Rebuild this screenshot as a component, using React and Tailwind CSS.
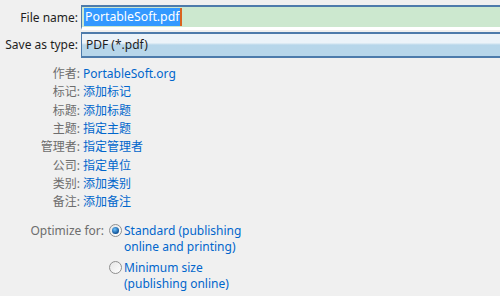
import React from 'react'

const meta = [
  ['作者:', 'PortableSoft.org'],
  ['标记:', '添加标记'],
  ['标题:', '添加标题'],
  ['主题:', '指定主题'],
  ['管理者:', '指定管理者'],
  ['公司:', '指定单位'],
  ['类别:', '添加类别'],
  ['备注:', '添加备注'],
]

function Radio({ checked }) {
  return (
    <span className="mt-[1px] flex h-[13px] w-[13px] shrink-0 items-center justify-center rounded-full border border-[#8f8f8f] bg-gradient-to-br from-[#e6e6e6] to-[#ffffff]">
      {checked && (
        <span className="h-[7px] w-[7px] rounded-full bg-[radial-gradient(circle_at_40%_35%,#6ec3ff,#0d4f94_70%)]" />
      )}
    </span>
  )
}

export default function App() {
  return (
    <div
      className="h-[296px] w-[500px] overflow-hidden bg-[#f0f0f0] text-[12px] text-[#1e1e1e]"
      style={{ fontFamily: '"Noto Sans", "Noto Sans CJK SC", sans-serif' }}
    >
      {/* File name */}
      <div className="flex items-center pt-[5px]">
        <span className="w-[81px] pr-[3px] text-right">File name:</span>
        <div className="flex h-[25px] flex-1 items-center border-t-2 border-l border-[#4d7bab] border-b-[3px] border-b-white bg-[#cce8cf] pl-[2px]">
          <span className="bg-[#3399ff] px-[1px] text-[12.3px] leading-[18px] text-white">PortableSoft.pdf</span>
          <span className="h-[18px] w-[2px] bg-[#d9631f]" />
        </div>
      </div>

      {/* Save as type */}
      <div className="mt-[2px] flex items-center">
        <span className="w-[81px] pr-[3px] text-right">Save as type:</span>
        <div className="flex h-[26px] flex-1 items-center border-y-2 border-l border-[#4d7bab] bg-gradient-to-b from-[#ecf3f9] from-40% to-[#b7d6ea] to-50% pl-[4px]">
          PDF (*.pdf)
        </div>
      </div>

      {/* metadata */}
      <div className="mt-[7px] flex flex-col">
        {meta.map(([label, value]) => (
          <div key={label} className="flex h-[18.3px] items-center">
            <span className="w-[83px] pr-[3px] text-right text-[#6d6d6d]">{label}</span>
            <span className="text-[#0066cc]">{value}</span>
          </div>
        ))}
      </div>

      {/* optimize */}
      <div className="mt-[12px] flex">
        <span className="w-[109px] pr-[5px] text-right leading-[16px] text-[#6d6d6d]">Optimize for:</span>
        <div className="flex flex-col gap-[5px]">
          <div className="flex gap-[2px]">
            <Radio checked />
            <div className="flex flex-col leading-[16px] text-[#0066cc]">
              <span>Standard (publishing</span>
              <span>online and printing)</span>
            </div>
          </div>
          <div className="flex gap-[2px]">
            <Radio />
            <div className="flex flex-col leading-[16px] text-[#0066cc]">
              <span>Minimum size</span>
              <span>(publishing online)</span>
            </div>
          </div>
        </div>
      </div>
    </div>
  )
}
